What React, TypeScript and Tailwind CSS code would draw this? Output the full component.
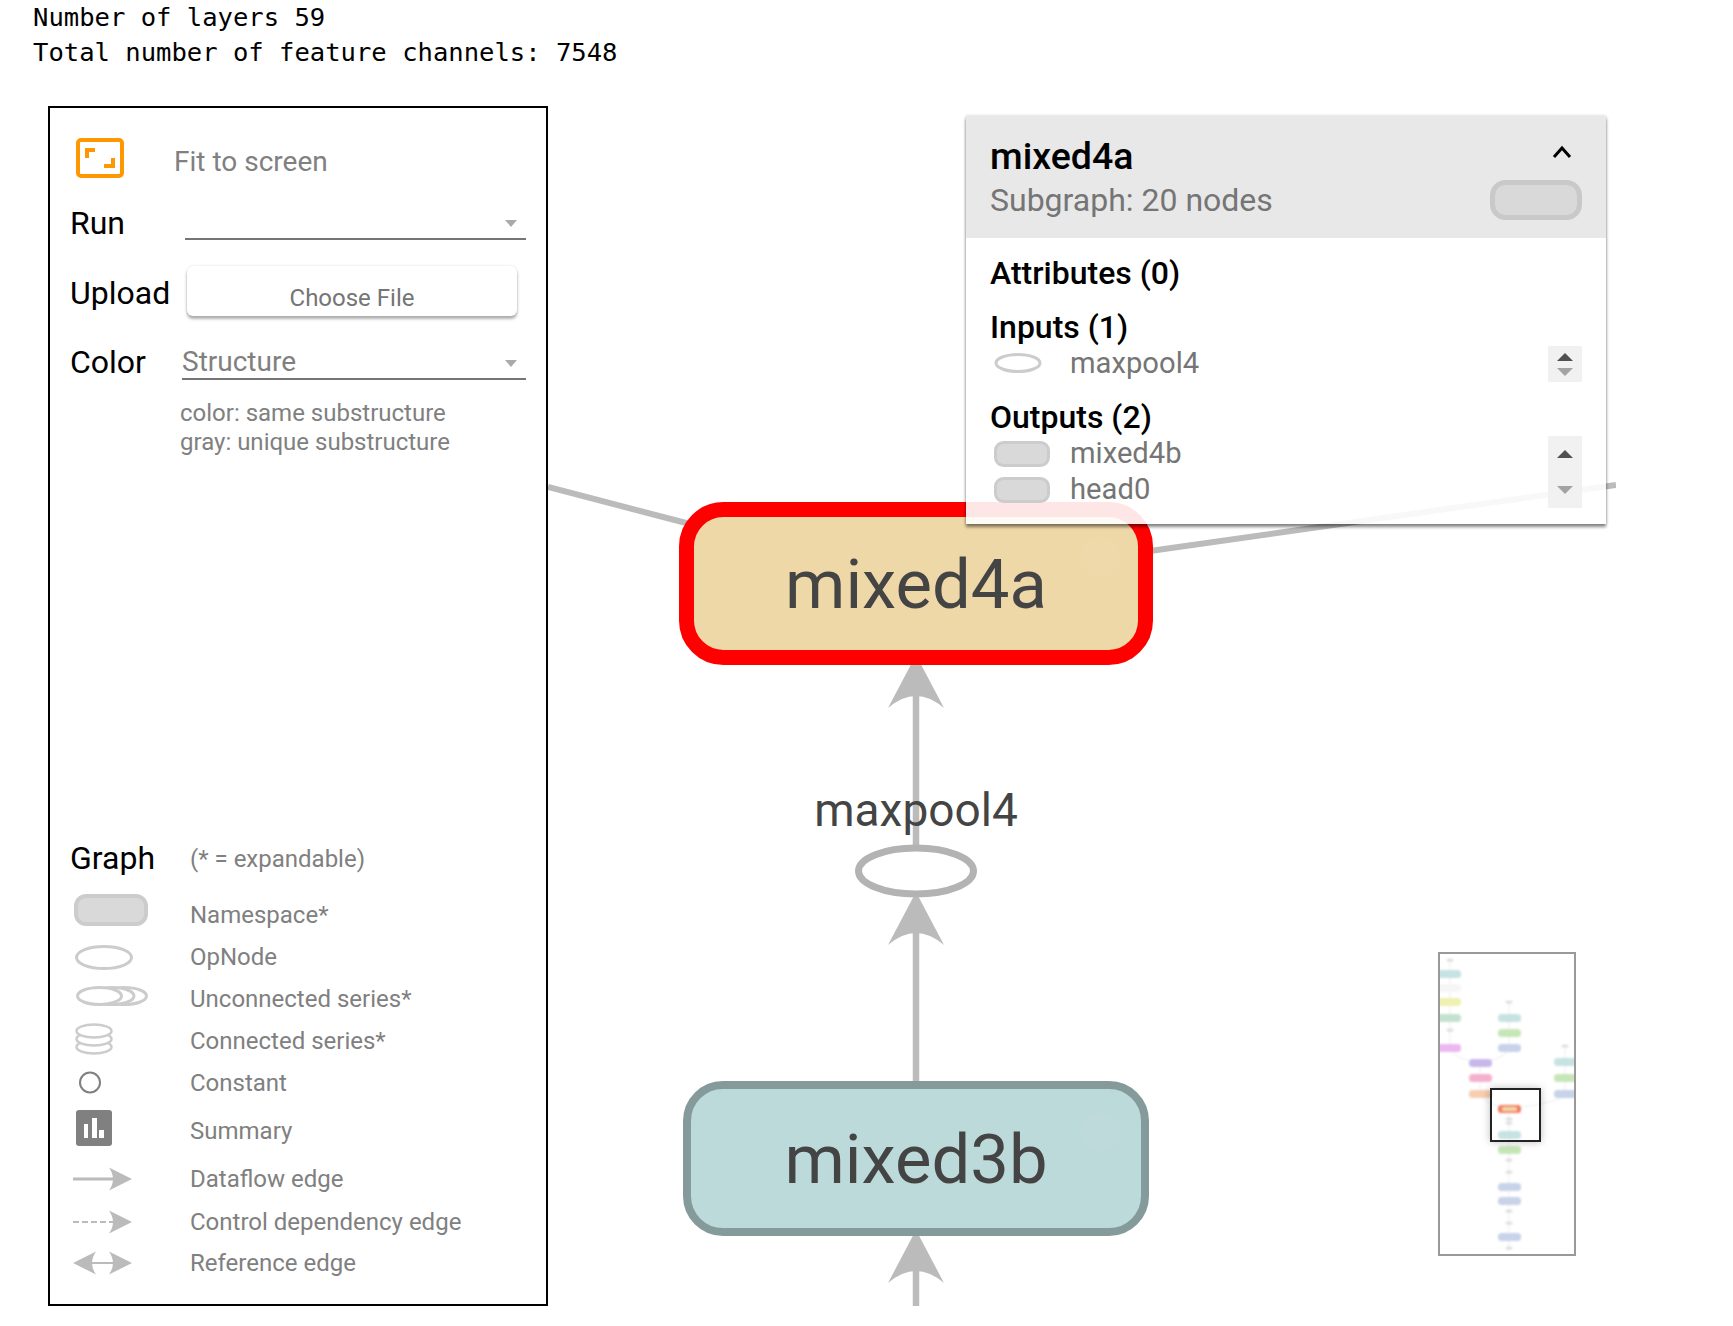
const Head = ({ x, barb }: { x: number; barb: number }) => (
  <path d={`M${x} ${barb - 53} L${x - 28} ${barb} Q${x} ${barb - 24} ${x + 28} ${barb} Z`} fill="#bbbbbb" />
);

const miniNodes: [number, number, number, string][] = [
  [-12, 22, 35, "#c6e2e2"],
  [-12, 36, 35, "#f6f6f6"],
  [-12, 50, 35, "#f0f0b0"],
  [-12, 66, 35, "#c2e2cf"],
  [-12, 96, 35, "#ecb8f0"],
  [60, 66, 23, "#c6e2e2"],
  [60, 81, 23, "#c6e6b8"],
  [60, 96, 23, "#c8d2e8"],
  [31, 111, 23, "#c8b8ea"],
  [31, 126, 23, "#f6b0cf"],
  [31, 142, 23, "#f6ceb0"],
  [116, 110, 30, "#c6e2e2"],
  [116, 126, 30, "#c6e6b8"],
  [116, 142, 30, "#c8d2e8"],
  [60, 183, 23, "#c6e2e2"],
  [60, 198, 23, "#c6e6b8"],
  [60, 235, 23, "#c8d2e8"],
  [60, 249, 23, "#c8d2e8"],
  [60, 285, 23, "#c8d2e8"],
];

const miniSmall: [number, number][] = [
  [12, 8], [12, 78], [71, 50], [127, 94], [71, 167], [71, 171], [71, 208], [71, 220], [71, 259], [71, 271], [71, 296],
];

const Arrow = () => (
  <svg className="absolute right-[9px] top-[16px]" width="12" height="8" viewBox="0 0 12 8">
    <path d="M0 0 H12 L6 7 Z" fill="#aaaaaa" />
  </svg>
);

const Row = ({ h, label, nudge, children }: { h: string; label: string; nudge?: boolean; children: React.ReactNode }) => (
  <div className={`flex items-center ${h}`}>
    {children}
    <span className={nudge ? "-ml-px pt-[2px] text-[24px] leading-[30px] text-[#808080]" : "-ml-px text-[24px] leading-[30px] text-[#808080]"}>{label}</span>
  </div>
);

const Scroll = ({ h, up, down }: { h: number; up: number; down: number }) => (
  <svg width="34" height={h} viewBox={`0 0 34 ${h}`} className="bg-[#f1f1f1] shrink-0">
    <path d={`M9 ${up + 8} L17 ${up} L25 ${up + 8} Z`} fill="#505050" />
    <path d={`M9 ${down} L25 ${down} L17 ${down + 8} Z`} fill="#a3a3a3" />
  </svg>
);

const SmallNs = () => (
  <svg width="80" height="36" viewBox="0 0 80 36" className="shrink-0">
    <rect x="5.5" y="6.5" width="53" height="23" rx="8" fill="#d9d9d9" stroke="#cccccc" strokeWidth="3" />
  </svg>
);

export default function App() {
  return (
    <div className="w-[1733px] h-[1326px] overflow-hidden bg-white font-['Roboto',sans-serif]">
      <pre className="pl-[33px] font-['DejaVu_Sans_Mono',monospace] text-[25.55px] leading-[35px] text-black h-[106px] m-0">
        {"Number of layers 59\nTotal number of feature channels: 7548"}
      </pre>
      <div className="flex pl-[48px]">
        <div className="w-[500px] h-[1200px] border-2 border-black shrink-0 pl-[20px] pt-[29px]">
          <div className="flex h-[41px]">
            <svg width="48" height="41" viewBox="0 0 48 41" className="ml-[6px] mt-px shrink-0">
              <rect x="2" y="2" width="44" height="36" rx="3" fill="none" stroke="#ff9800" strokeWidth="4" />
              <path d="M9 20 V10 H19 V14 H13 V20 Z M39 20 V30 H28 V26 H35 V20 Z" fill="#ff9800" />
            </svg>
            <span className="ml-[50px] mt-[9px] text-[28px] leading-[32px] text-[#808080]">Fit to screen</span>
          </div>
          <div className="flex h-[36px] mt-[26px]">
            <span className="w-[115px] pt-px text-[32px] leading-[36px] text-black">Run</span>
            <div className="relative w-[341px] border-b-2 border-[#757575]"><Arrow /></div>
          </div>
          <div className="flex h-[50px] mt-[26px]">
            <span className="w-[117px] pt-[9px] text-[32px] leading-[36px] text-black">Upload</span>
            <div className="w-[330px] h-[50px] rounded-[6px] bg-white shadow-[0_3px_3px_rgba(0,0,0,0.3),0_0_3px_rgba(0,0,0,0.12)] pt-[17px] text-center text-[24px] leading-[30px] text-[#757575]">
              Choose File
            </div>
          </div>
          <div className="flex h-[36px] mt-[28px]">
            <span className="w-[112px] text-[32px] leading-[36px] text-black">Color</span>
            <div className="relative w-[344px] border-b-2 border-[#757575] pt-[3px] text-[28px] leading-[30px] text-[#808080]">
              Structure
              <Arrow />
            </div>
          </div>
          <div className="ml-[110px] mt-[19px] text-[24px] leading-[28.5px] text-[#808080]">
            <div>color: same substructure</div>
            <div>gray: unique substructure</div>
          </div>
          <div className="flex h-[36px] mt-[384px]">
            <span className="w-[120px] text-[32px] leading-[36px] text-black">Graph</span>
            <span className="pt-[4px] text-[24px] leading-[30px] text-[#808080]">(* = expandable)</span>
          </div>
          <div className="mt-[18px]">
            <Row h="h-[42px]" label="Namespace*">
              <svg width="120" height="42" viewBox="0 0 120 42" className="ml-px shrink-0">
                <rect x="5" y="2" width="70" height="28" rx="10" fill="#d9d9d9" stroke="#cccccc" strokeWidth="4" />
              </svg>
            </Row>
            <Row h="h-[41px]" label="OpNode">
              <svg width="120" height="41" viewBox="0 0 120 41" className="ml-px shrink-0">
                <ellipse cx="33" cy="21.5" rx="27.5" ry="11" fill="white" stroke="#cccccc" strokeWidth="3" />
              </svg>
            </Row>
            <Row h="h-[42px]" label="Unconnected series*" nudge>
              <svg width="120" height="42" viewBox="0 0 120 42" className="ml-px shrink-0">
                <ellipse cx="53.5" cy="19" rx="22" ry="8.5" fill="white" stroke="#cccccc" strokeWidth="3" />
                <ellipse cx="41" cy="19" rx="22" ry="8.5" fill="white" stroke="#cccccc" strokeWidth="3" />
                <ellipse cx="28.5" cy="19" rx="22" ry="8.5" fill="white" stroke="#cccccc" strokeWidth="3" />
              </svg>
            </Row>
            <Row h="h-[42px]" label="Connected series*" nudge>
              <svg width="120" height="42" viewBox="0 0 120 42" className="ml-px shrink-0">
                <ellipse cx="23" cy="28" rx="17.5" ry="6.5" fill="white" stroke="#cccccc" strokeWidth="2.5" />
                <ellipse cx="23" cy="20" rx="17.5" ry="6.5" fill="white" stroke="#cccccc" strokeWidth="2.5" />
                <ellipse cx="23" cy="12" rx="17.5" ry="6.5" fill="white" stroke="#cccccc" strokeWidth="2.5" />
              </svg>
            </Row>
            <Row h="h-[43px]" label="Constant">
              <svg width="120" height="43" viewBox="0 0 120 43" className="ml-px shrink-0">
                <circle cx="19" cy="21.5" r="10" fill="white" stroke="#808080" strokeWidth="2" />
              </svg>
            </Row>
            <Row h="h-[52px]" label="Summary" nudge>
              <svg width="120" height="52" viewBox="0 0 120 52" className="ml-px shrink-0">
                <rect x="5" y="6" width="36" height="36" rx="3" fill="#808080" />
                <path d="M13 20 H17 V34 H13 Z M21 14 H26 V34 H21 Z M28 26 H33 V34 H28 Z" fill="white" />
              </svg>
            </Row>
            <Row h="h-[46px]" label="Dataflow edge">
              <svg width="120" height="46" viewBox="0 0 120 46" className="ml-px shrink-0">
                <path d="M2 23 H45" stroke="#bbbbbb" strokeWidth="3" />
                <path d="M61 23 L38 11.5 Q46 23 38 34.5 Z" fill="#bbbbbb" />
              </svg>
            </Row>
            <Row h="h-[37px]" label="Control dependency edge" nudge>
              <svg width="120" height="37" viewBox="0 0 120 37" className="ml-px shrink-0">
                <path d="M2 20 H45" stroke="#bbbbbb" strokeWidth="2" strokeDasharray="6 3" />
                <path d="M61 20 L38 8.5 Q46 20 38 31.5 Z" fill="#bbbbbb" />
              </svg>
            </Row>
            <Row h="h-[48px]" label="Reference edge">
              <svg width="120" height="48" viewBox="0 0 120 48" className="ml-px shrink-0">
                <path d="M15 24 H48" stroke="#bbbbbb" strokeWidth="2" />
                <path d="M61 24 L38 12.5 Q46 24 38 35.5 Z" fill="#bbbbbb" />
                <path d="M2 24 L25 12.5 Q17 24 25 35.5 Z" fill="#bbbbbb" />
              </svg>
            </Row>
          </div>
        </div>

        <div className="relative w-[1068px] h-[1199px] mt-px shrink-0">
          <svg width="1068" height="1199" viewBox="548 107 1068 1199" className="block">
            <path d="M548 487 L690 524" stroke="#bbbbbb" strokeWidth="6" />
            <path d="M1150 551 L1616 485" stroke="#bbbbbb" strokeWidth="6" />
            <path d="M916 690 V850" stroke="#bbbbbb" strokeWidth="6.5" />
            <path d="M916 925 V1085" stroke="#bbbbbb" strokeWidth="6.5" />
            <path d="M916 1262 V1306" stroke="#bbbbbb" strokeWidth="6.5" />

            <Head x={916} barb={708} />
            <Head x={916} barb={945} />
            <Head x={916} barb={1283} />

            <rect x="686.5" y="509.5" width="459" height="148" rx="37" fill="#efd8a8" stroke="#ff0000" strokeWidth="15" />
            <circle cx="1100" cy="557" r="20" fill="white" fillOpacity="0.025" />
            <text x="916" y="608" textAnchor="middle" fontSize="68.8" fill="#444444">mixed4a</text>

            <text x="916" y="826" textAnchor="middle" fontSize="46" fill="#444444">maxpool4</text>
            <ellipse cx="916" cy="871" rx="57.5" ry="23" fill="white" stroke="#b3b3b3" strokeWidth="7" />

            <rect x="687" y="1085" width="458" height="147" rx="36" fill="#bddada" stroke="#859a9a" strokeWidth="8" />
            <circle cx="1101" cy="1132" r="20" fill="white" fillOpacity="0.025" />
            <text x="916" y="1183" textAnchor="middle" fontSize="68.8" fill="#444444">mixed3b</text>
          </svg>

          <div className="absolute left-[418px] top-[9px] w-[640px] h-[408px] bg-white/90 shadow-[0_3px_3px_rgba(0,0,0,0.45),0_0_3px_rgba(0,0,0,0.2)]">
            <div className="flex justify-between h-[122px] bg-[#e8e8e8] pl-[24px] pr-[24px] pt-[19px]">
              <div>
                <div className="text-[37.5px] leading-[42px] font-medium text-black">mixed4a</div>
                <div className="mt-[4px] text-[32px] leading-[38px] text-[#757575]">Subgraph: 20 nodes</div>
              </div>
              <div className="flex flex-col items-end">
                <svg width="20" height="14" viewBox="0 0 20 14" className="mr-[10px] mt-[10px]">
                  <path d="M2 12 L10 3 L18 12" fill="none" stroke="black" strokeWidth="3" />
                </svg>
                <svg width="92" height="40" viewBox="0 0 92 40" className="mt-[21px]">
                  <rect x="2.5" y="2.5" width="87" height="35" rx="13" fill="#d9d9d9" stroke="#c9c9c9" strokeWidth="5" />
                </svg>
              </div>
            </div>
            <div className="pl-[24px] pr-[24px] pt-[16px]">
              <div className="text-[32px] leading-[38px] font-medium text-black">Attributes (0)</div>
              <div className="mt-[16px] text-[32px] leading-[38px] font-medium text-black">Inputs (1)</div>
              <div className="flex justify-between h-[36px]">
                <div className="flex h-[36px]">
                  <svg width="80" height="36" viewBox="0 0 80 36" className="shrink-0">
                    <ellipse cx="28" cy="17" rx="22" ry="8.5" fill="white" stroke="#cccccc" strokeWidth="3" />
                  </svg>
                  <span className="-mt-px text-[29.2px] leading-[36px] text-[#757575]">maxpool4</span>
                </div>
                <Scroll h={36} up={7} down={22} />
              </div>
              <div className="mt-[16px] text-[32px] leading-[38px] font-medium text-black">Outputs (2)</div>
              <div className="flex justify-between h-[72px]">
                <div>
                  <div className="flex h-[36px]">
                    <SmallNs />
                    <span className="-mt-px text-[29.2px] leading-[36px] text-[#757575]">mixed4b</span>
                  </div>
                  <div className="flex h-[36px]">
                    <SmallNs />
                    <span className="-mt-px text-[29.2px] leading-[36px] text-[#757575]">head0</span>
                  </div>
                </div>
                <Scroll h={72} up={14} down={50} />
              </div>
            </div>
          </div>

          <div className="absolute left-[890px] top-[845px] w-[138px] h-[304px] border-2 border-[#999999] bg-white overflow-hidden">
            <svg width="134" height="300" viewBox="2 2 134 300" className="block">
              <defs>
                <filter id="miniblur" x="-20%" y="-20%" width="140%" height="140%">
                  <feGaussianBlur stdDeviation="1" />
                </filter>
              </defs>
              <g filter="url(#miniblur)">
                <path d="M12 8 V96 Q14 106 42 111 M71 50 V96 Q69 106 42 111 M42 111 V142 Q46 152 71 157 M127 94 V142 Q125 150 71 157 M71 157 V296" fill="none" stroke="#e8e8e8" strokeWidth="0.8" />
                {miniNodes.map(([x, y, w, c], i) => (
                  <rect key={i} x={x} y={y - 4} width={w} height="8" rx="3.5" fill={c} />
                ))}
                <rect x="60" y="153" width="23" height="8" rx="3" fill="#f47a60" />
                <rect x="64" y="155" width="15" height="4" rx="1.5" fill="#efd8a8" />
                {miniSmall.map(([x, y], i) => (
                  <ellipse key={i} cx={x} cy={y} rx="3.5" ry="1.5" fill="#dcdcdc" />
                ))}
              </g>
            </svg>
            <div className="absolute left-[50px] top-[134px] w-[51px] h-[54px] border-2 border-[#222222] shadow-[0_0_8px_rgba(0,0,0,0.25)]"></div>
          </div>
        </div>
      </div>
    </div>
  );
}
